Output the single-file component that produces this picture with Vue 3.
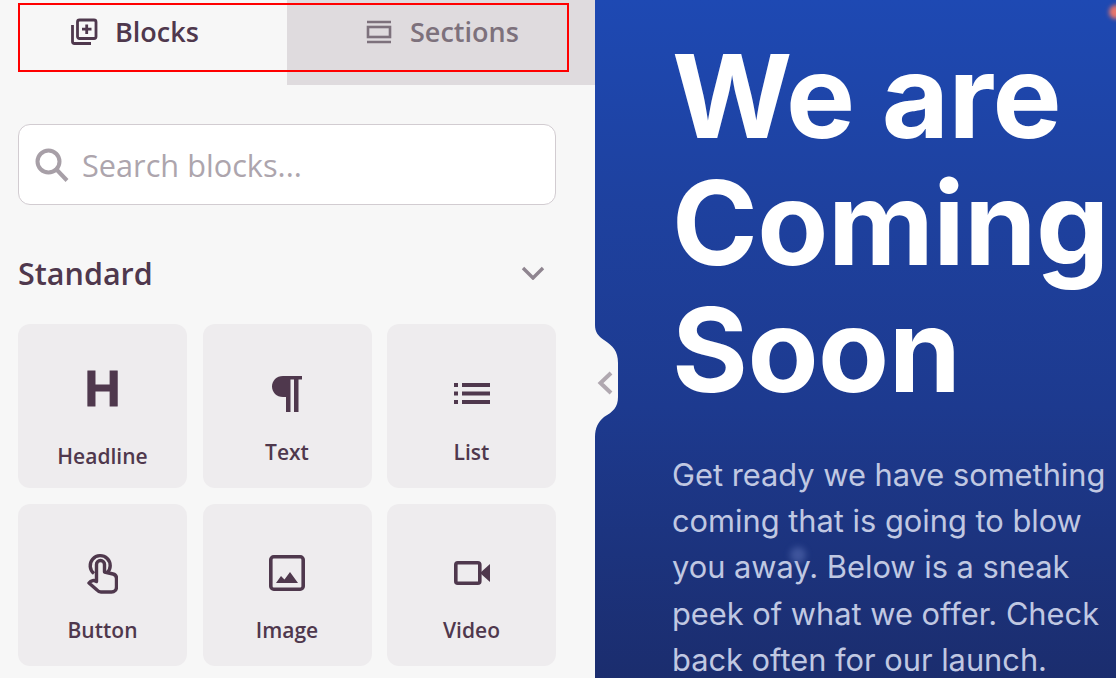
<script setup>
const hero = ['We are', 'Coming', 'Soon']
const copy = ['Get ready we have something', 'coming that is going to blow', 'you away. Below is a sneak', 'peek of what we offer. Check', 'back often for our launch.']
const blocks = [
  { id: 'h', label: 'Headline' },
  { id: 'p', label: 'Text' },
  { id: 'l', label: 'List' },
  { id: 'b', label: 'Button' },
  { id: 'i', label: 'Image' },
  { id: 'v', label: 'Video' }
]
</script>

<template>
  <div class="page">
    <aside class="side">
      <div class="tabs">
        <div class="tab active">
          <svg class="tab-ic" width="28" height="28" viewBox="0 0 28 28" fill="none" stroke="currentColor" stroke-width="2.800">
            <rect x="7.500" y="2" width="18.500" height="18.500" rx="2" />
            <path d="M2.500 7v16.500a2 2 0 0 0 2 2H21" />
            <path d="M16.700 6.500v9.500M12 11.200h9.500" />
          </svg>
          <span>Blocks</span>
        </div>
        <div class="tab">
          <svg class="tab-ic" width="26" height="24" viewBox="0 0 26 24" fill="none" stroke="currentColor" stroke-width="2.600">
            <path d="M1 2h24M1 22h24" />
            <rect x="2" y="7" width="22" height="10" />
          </svg>
          <span>Sections</span>
        </div>
      </div>
      <div class="body">
        <div class="search">
          <svg width="36" height="36" viewBox="0 0 36 36" fill="none" stroke="#a79fa7" stroke-width="4">
            <circle cx="14.500" cy="14.500" r="11" />
            <path d="M22.500 22.500L33 33.500" />
          </svg>
          <span>Search blocks...</span>
        </div>
        <div class="group">
          <h2>Standard</h2>
          <svg width="24" height="14" viewBox="0 0 24 14" fill="none" stroke="#8f8590" stroke-width="3.400">
            <path d="M2 2l10 10L22 2" />
          </svg>
        </div>
        <div class="grid">
          <div v-for="b in blocks" :key="b.id" class="card" :class="'card-' + b.id">
            <div class="ic">
              <span v-if="b.id === 'h'" class="glyph-h">H</span>
              <svg v-else-if="b.id === 'p'" width="32" height="38" viewBox="0 0 32 38" fill="#4f384d">
                <path d="M12 1h19v3.500h-3.500V37h-4.500V4.500h-3.500V37H15V22h-3C5.500 22 1 17.200 1 11.500S5.500 1 12 1z" />
              </svg>
              <svg v-else-if="b.id === 'l'" width="36" height="21" viewBox="0 0 36 21" fill="#4f384d">
                <path d="M0 0h4v4H0zM8 0h28v4H8zM0 8.500h4v4H0zM8 8.500h28v4H8zM0 17h4v4H0zM8 17h28v4H8z" />
              </svg>
              <svg v-else-if="b.id === 'b'" width="31" height="41" viewBox="0 0 31 41" fill="none" stroke="#4f384d" stroke-width="3.400" stroke-linejoin="round">
                <path d="M7 20.500A10 10 0 1 1 20 20" />
                <path d="M9.500 24V11.500a4 4 0 0 1 8 0V19l8.500 2c2.500.6 3.500 2 3.500 4.500V34c0 3-2 5-5 5H14c-1.800 0-3-.8-4-2l-8-7c2-2.500 5-3.200 7.500-1.500z" />
              </svg>
              <svg v-else-if="b.id === 'i'" width="36" height="36" viewBox="0 0 36 36" fill="none" stroke="#4f384d" stroke-width="3.600">
                <rect x="1.800" y="1.800" width="32.400" height="32.400" rx="3" />
                <path d="M7 28l5-7 3.500 3.500L21 17l8 11z" fill="#4f384d" stroke="none" />
              </svg>
              <svg v-else width="36" height="24" viewBox="0 0 36 24" fill="none" stroke="#4f384d" stroke-width="3.600">
                <rect x="1.800" y="1.800" width="24" height="20.400" rx="2" />
                <path d="M26 12L36 3v18z" fill="#4f384d" stroke="none" />
              </svg>
            </div>
            <div class="label">{{ b.label }}</div>
          </div>
        </div>
      </div>
    </aside>

    <main class="hero">
      <h1>
        <span v-for="l in hero" :key="l">{{ l }}</span>
      </h1>
      <p>
        <span v-for="l in copy" :key="l">{{ l }}</span>
      </p>
    </main>

    <svg class="notch" width="24" height="112" viewBox="0 0 24 112">
      <path d="M0 0C0 7 3 11 9 15C18 21 23 26 23 38V72C23 82 18 87 9 92C3 97 0 103 0 112z" fill="#f7f7f7" />
      <path d="M16 48L5.500 58L16 68" fill="none" stroke="#b0a8b0" stroke-width="4" />
    </svg>
    <div class="frame"></div>
    <div class="spark-red"></div>
    <div class="spark-soft"></div>
  </div>
</template>

<style>
html, body { margin: 0; background: #f7f7f7; overflow: hidden; }
</style>

<style scoped>
.page {
  position: relative;
  display: flex;
  width: 1116px;
  height: 678px;
  overflow: hidden;
}
.side {
  width: 595px;
  flex: none;
  background: #f7f7f7;
  font-family: "Open Sans", sans-serif;
  color: #4f384d;
}
.tabs { display: flex; height: 85px; }
.tab {
  flex: 0 0 308px;
  height: 85px;
  box-sizing: border-box;
  padding-top: 10px;
  padding-bottom: 32px;
  padding-left: 79px;
  background: #dfdbde;
  color: #7d717c;
  display: flex;
  align-items: center;
  gap: 18px;
  font-size: 27px;
  font-weight: 600;
}
.tab.active {
  flex: 0 0 287px;
  padding-left: 70px;
  background: #f7f7f7;
  color: #4f384d;
  gap: 17px;
}
.body { padding: 39px 39px 0 18px; }
.search {
  height: 81px;
  box-sizing: border-box;
  border: 1px solid #d2ccd1;
  border-radius: 12px;
  background: #fff;
  display: flex;
  align-items: center;
  gap: 12px;
  padding-left: 15px;
  font-size: 30.700px;
  color: #ada5ad;
}
.group {
  display: flex;
  align-items: center;
  justify-content: space-between;
  margin-top: 48px;
  height: 40px;
  padding-right: 11px;
}
h2 { margin: 0; font-size: 30.500px; font-weight: 600; color: #4f384d; }
.grid {
  margin-top: 31px;
  display: grid;
  grid-template-columns: 169px 169px 169px;
  grid-template-rows: 164px 162px;
  column-gap: 15.500px;
  row-gap: 16px;
}
.card {
  background: #eeecee;
  border-radius: 12px;
  display: flex;
  flex-direction: column;
  align-items: center;
  box-sizing: border-box;
}
.ic {
  height: 44px;
  margin-top: 46px;
  display: flex;
  align-items: center;
  justify-content: center;
}
.glyph-h {
  font-family: "Liberation Sans", sans-serif;
  font-weight: 700;
  font-size: 50px;
  line-height: 44px;
  margin-bottom: 6px;
  color: #4f384d;
  -webkit-text-stroke: .8px #4f384d;
}
.label {
  margin-top: 28px;
  font-size: 21px;
  font-weight: 600;
  line-height: 28px;
  color: #4f384d;
}
.card-p .ic { margin-top: 48px; }
.card-p .label { margin-top: 22px; }
.card-l .ic { margin-top: 47px; }
.card-l .label { margin-top: 23px; }
.card-b .ic, .card-i .ic, .card-v .ic { margin-top: 47px; }
.card-b .label, .card-i .label, .card-v .label { margin-top: 21px; }
.hero {
  flex: 1;
  background: linear-gradient(180deg, #1e49b3 0%, #1e419f 30%, #1d3a8f 60%, #1b2d6e 100%);
  font-family: Inter, sans-serif;
  color: #fff;
  padding-left: 77px;
  padding-top: 33px;
}
h1 {
  margin: 0;
  font-size: 116px;
  line-height: 127px;
  font-weight: 700;
  letter-spacing: -.5px;
}
h1 span, p span { display: block; white-space: nowrap; }
p {
  margin: 38px 0 0;
  font-size: 30.800px;
  line-height: 46.200px;
  color: #c0c8e2;
}
.notch { position: absolute; left: 595px; top: 325px; }
.frame {
  position: absolute;
  left: 18px;
  top: 3px;
  width: 551px;
  height: 69px;
  box-sizing: border-box;
  border: 2px solid #f00;
}
.spark-red {
  position: absolute;
  left: 1109px;
  top: 5px;
  width: 14px;
  height: 14px;
  border-radius: 50%;
  background: #e8756a;
  filter: blur(2px);
}
.spark-soft {
  position: absolute;
  left: 790px;
  top: 547px;
  width: 16px;
  height: 16px;
  border-radius: 50%;
  background: rgba(130, 150, 215, .35);
  filter: blur(3px);
}
</style>
